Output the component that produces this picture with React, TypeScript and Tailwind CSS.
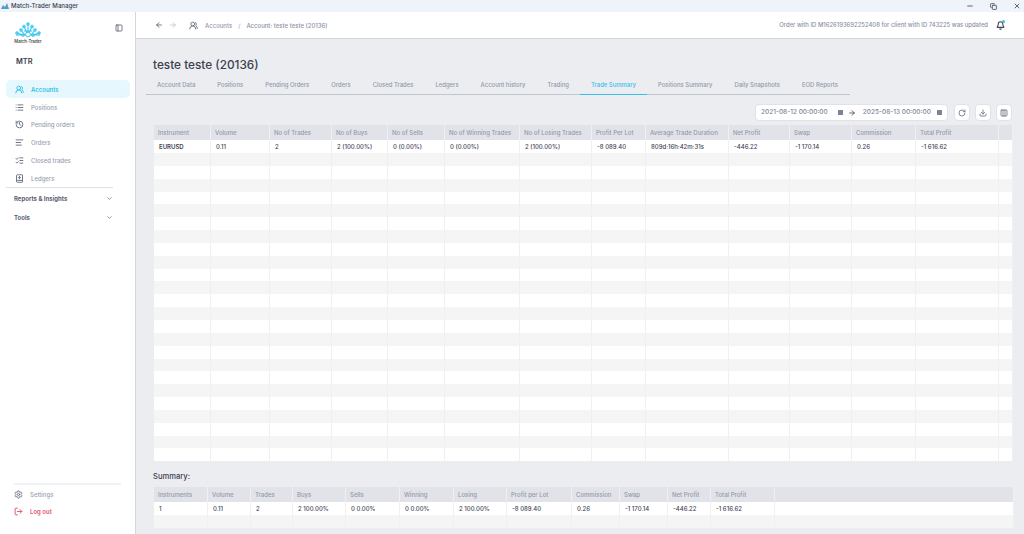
import {
  ArrowLeft,
  ArrowRight,
  Bell,
  ChevronDown,
  Columns3,
  Copy,
  Download,
  History,
  ListChecks,
  List,
  AlignLeft,
  BookUp,
  LogOut,
  Minus,
  PanelLeft,
  RotateCw,
  Settings,
  UsersRound,
  X,
} from 'lucide-react'

const FONT = 'font-["Inter","Noto_Sans",sans-serif]'

const NAV_ITEMS = [
  { label: 'Positions', icon: List },
  { label: 'Pending orders', icon: History },
  { label: 'Orders', icon: AlignLeft },
  { label: 'Closed trades', icon: ListChecks },
  { label: 'Ledgers', icon: BookUp },
]

const TABS = [
  'Account Data',
  'Positions',
  'Pending Orders',
  'Orders',
  'Closed Trades',
  'Ledgers',
  'Account history',
  'Trading',
  'Trade Summary',
  'Positions Summary',
  'Daily Snapshots',
  'EOD Reports',
]

const MAIN_HEAD = [
  'Instrument',
  'Volume',
  'No of Trades',
  'No of Buys',
  'No of Sells',
  'No of Winning Trades',
  'No of Losing Trades',
  'Profit Per Lot',
  'Average Trade Duration',
  'Net Profit',
  'Swap',
  'Commission',
  'Total Profit',
  '',
]

const MAIN_ROW = [
  'EURUSD',
  '0.11',
  '2',
  '2 (100.00%)',
  '0 (0.00%)',
  '0 (0.00%)',
  '2 (100.00%)',
  '-8 089.40',
  '809d:16h:42m:31s',
  '-446.22',
  '-1 170.14',
  '0.26',
  '-1 616.62',
  '',
]

const SUMMARY_HEAD = [
  'Instruments',
  'Volume',
  'Trades',
  'Buys',
  'Sells',
  'Winning',
  'Losing',
  'Profit per Lot',
  'Commission',
  'Swap',
  'Net Profit',
  'Total Profit',
  '',
]

const SUMMARY_ROW = [
  '1',
  '0.11',
  '2',
  '2 100.00%',
  '0 0.00%',
  '0 0.00%',
  '2 100.00%',
  '-8 089.40',
  '0.26',
  '-1 170.14',
  '-446.22',
  '-1 616.62',
  '',
]

const MAIN_COLS =
  'grid grid-cols-[57px_59px_62px_56px_57px_75px_72px_54px_83px_61px_62px_64px_83px_14px]'
const SUMMARY_COLS =
  'grid grid-cols-[54px_43px_42px_53px_54px_54px_53px_65px_48px_48px_43px_64px_239px]'

function Logo() {
  const nodes = [
    [2, 11],
    [6, 8],
    [8, 13],
    [9, 4.5],
    [13, 2],
    [17, 4.5],
    [20, 8],
    [18, 13],
    [24, 11],
  ]
  return (
    <svg width="26" height="16" viewBox="0 0 26 16" fill="none">
      <g stroke="#35c4ee" strokeWidth="1.1">
        <path d="M1 13H25M13 2V13M9 4.5L13 13L17 4.5M6 8L10 13M20 8L16 13M2 11L8 13M24 11L18 13M9 9H17" />
      </g>
      {nodes.map(([cx, cy]) => (
        <circle key={`${cx}-${cy}`} cx={cx} cy={cy} r="1.5" fill="#4fd0f3" stroke="#35c4ee" strokeWidth="0.5" />
      ))}
      <circle cx="13" cy="12.5" r="2.4" fill="#ffffff" stroke="#35c4ee" />
    </svg>
  )
}

function DataTable({
  cols,
  head,
  row,
  rows,
}: {
  cols: string
  head: string[]
  row: string[]
  rows: number
}) {
  return (
    <div>
      <div className={`${cols} h-[15px] bg-[#e1e3e8]`}>
        {head.map((h, i) => (
          <div
            key={i}
            className="flex items-center whitespace-nowrap border-r border-[#eef0f3] pl-[4px] text-[6px] font-medium text-[#9299ac]"
          >
            {h}
          </div>
        ))}
      </div>
      <div className={`${cols} h-[13px] bg-white`}>
        {row.map((c, i) => (
          <div
            key={i}
            className={`flex items-center whitespace-nowrap border-r border-[#eef0f3] pl-[5px] text-[6px] text-[#3f4454] ${
              c === 'EURUSD' ? 'font-semibold' : 'font-medium'
            }`}
          >
            {c}
          </div>
        ))}
      </div>
      {Array.from({ length: rows }).map((_, r) => (
        <div
          key={r}
          className={`${cols} h-[12.85px] ${r % 2 === 0 ? 'bg-[#f5f5f6]' : 'bg-white'}`}
        >
          {head.map((_, i) => (
            <div key={i} className="border-r border-[#eef0f3]" />
          ))}
        </div>
      ))}
    </div>
  )
}

function Sidebar() {
  return (
    <aside className="flex w-[136px] shrink-0 flex-col border-r border-[#d5d7dd] bg-white">
      <div className="flex items-start justify-between pl-[14px] pr-[12px] pt-[10px]">
        <div className="flex w-[28px] flex-col items-center">
          <Logo />
          <span className="mt-[1px] whitespace-nowrap text-[4.2px] font-medium text-[#333]">
            Match-Trader
          </span>
        </div>
        <PanelLeft size={8} strokeWidth={2.5} className="mt-[2px] text-[#5d6472]" />
      </div>
      <div className="mt-[11px] pl-[16px] text-[7.4px] font-semibold text-[#3c4150]">MTR</div>

      <nav className="mt-[13px] flex flex-col pl-[6px] pr-[5px]">
        <div className="flex h-[18px] items-center gap-[7px] rounded-[5px] bg-[#e6f8fe] pl-[9px] text-[6px] font-semibold text-[#38bfe7]">
          <UsersRound size={9} strokeWidth={2.6} />
          Accounts
        </div>
        {NAV_ITEMS.map(({ label, icon: Icon }) => (
          <div
            key={label}
            className="flex h-[17.7px] items-center gap-[7px] pl-[9px] text-[6px] font-medium text-[#9aa1b1]"
          >
            <Icon size={9} strokeWidth={2.6} className="text-[#6f7686]" />
            {label}
          </div>
        ))}
      </nav>

      <div className="ml-[6px] w-[107px] border-t border-[#dfe1e6]" />
      <div className="mt-[5px] flex h-[12px] items-center justify-between pl-[14px] pr-[22px] text-[6px] font-bold text-[#5a6070]">
        Reports &amp; Insights
        <ChevronDown size={7} strokeWidth={2.6} className="text-[#6f7686]" />
      </div>
      <div className="mt-[7px] flex h-[12px] items-center justify-between pl-[14px] pr-[22px] text-[6px] font-bold text-[#5a6070]">
        Tools
        <ChevronDown size={7} strokeWidth={2.6} className="text-[#6f7686]" />
      </div>

      <div className="mt-auto pb-[14px]">
        <div className="ml-[14px] w-[107px] border-t-2 border-[#eff2f7]" />
        <div className="mt-[1px] flex h-[17px] items-center gap-[7px] pl-[14px] text-[6px] font-medium text-[#9aa1b1]">
          <Settings size={9} strokeWidth={2.6} className="text-[#6f7686]" />
          Settings
        </div>
        <div className="flex h-[17px] items-center gap-[7px] pl-[14px] text-[6px] font-semibold text-[#e5566d]">
          <LogOut size={9} strokeWidth={2.6} />
          Log out
        </div>
      </div>
    </aside>
  )
}

function TopBar() {
  return (
    <header className="flex h-[27px] shrink-0 items-center border-b border-[#d5d7dd] bg-white pl-[19px] pr-[19px]">
      <ArrowLeft size={8} strokeWidth={2.6} className="text-[#5d6472]" />
      <ArrowRight size={8} strokeWidth={2.4} className="ml-[6px] text-[#bcc1cb]" />
      <UsersRound size={9} strokeWidth={2.6} className="ml-[12px] text-[#6f7686]" />
      <span className="ml-[7px] whitespace-nowrap text-[6px] font-medium text-[#9299ac]">Accounts</span>
      <span className="ml-[6px] text-[6px] text-[#9299ac]">/</span>
      <span className="ml-[6px] whitespace-nowrap text-[6px] font-medium text-[#8a91a3]">
        Account: teste teste (20136)
      </span>
      <span className="ml-auto whitespace-nowrap text-[5.9px] font-medium text-[#8a91a3]">
        Order with ID M1626193692252408 for client with ID 743225 was updated
      </span>
      <span className="relative ml-[8px]">
        <Bell size={9} strokeWidth={2.8} className="text-[#3f4454]" />
        <span className="absolute right-[0px] top-[-1px] h-[3px] w-[3px] rounded-full bg-[#35bfe8]" />
      </span>
    </header>
  )
}

export default function App() {
  return (
    <div className={`flex h-screen w-screen flex-col overflow-hidden bg-white ${FONT}`}>
      <div className="flex h-[12px] shrink-0 items-center bg-[#eff3fa]">
        <svg width="8" height="6" viewBox="0 0 8 6" className="ml-[1px]">
          <path d="M0 6L2 2L4 4L6 0L8 6Z" fill="#4f9fc4" />
        </svg>
        <span className="ml-[2px] text-[6.1px] font-medium text-[#3b3f48]">Match-Trader Manager</span>
        <div className="ml-auto flex items-center gap-[16px] pr-[3px] text-[#4c505a]">
          <Minus size={8} strokeWidth={2.6} />
          <Copy size={7} strokeWidth={2.8} />
          <X size={8} strokeWidth={2.6} />
        </div>
      </div>

      <div className="flex min-h-0 flex-1">
        <Sidebar />
        <div className="flex min-w-0 flex-1 flex-col bg-[#ebedf1]">
          <TopBar />
          <main className="flex-1 pl-[10px] pr-[10px]">
            <h1 className="ml-[7px] mt-[17px] text-[11.8px] font-medium leading-[18px] text-[#3c4150]">
              teste teste (20136)
            </h1>
            <div className="mt-[5px] flex w-[704px] border-b border-[#c3c6ce]">
              {TABS.map((tab) => (
                <div
                  key={tab}
                  className={`-mb-px flex h-[16px] items-center whitespace-nowrap border-b px-[11px] pb-[2px] text-[5.93px] font-medium ${
                    tab === 'Trade Summary'
                      ? 'border-[#38bfe7] text-[#38bfe7]'
                      : 'border-transparent text-[#9299ac]'
                  }`}
                >
                  {tab}
                </div>
              ))}
            </div>

            <div className="mt-[9px] flex justify-end gap-[5px] pr-[2px]">
              <div className="mr-[1px] flex h-[17px] w-[193px] items-center rounded-[4px] border border-[#e0e2e8] bg-white pl-[5px] pr-[5px] text-[6.5px] font-medium text-[#7d8496]">
                <span className="whitespace-nowrap">2021-08-12 00:00:00</span>
                <span className="ml-[10px] h-[5px] w-[5px] bg-[#7d8496]" />
                <ArrowRight size={8} strokeWidth={2.6} className="ml-[5px] text-[#4c5160]" />
                <span className="ml-[7px] whitespace-nowrap">2025-08-13 00:00:00</span>
                <span className="ml-auto h-[5px] w-[5px] bg-[#7d8496]" />
              </div>
              {[RotateCw, Download, Columns3].map((Icon, i) => (
                <div
                  key={i}
                  className="flex h-[17px] w-[16px] items-center justify-center rounded-[4px] border border-[#e0e2e8] bg-white"
                >
                  <Icon size={8} strokeWidth={2.6} className="text-[#6f7686]" />
                </div>
              ))}
            </div>

            <div className="ml-[8px] mt-[4px] w-[859px]">
              <DataTable cols={MAIN_COLS} head={MAIN_HEAD} row={MAIN_ROW} rows={24} />
            </div>

            <div className="ml-[7px] mt-[11px] text-[7.6px] font-medium leading-[10px] text-[#3c4150]">
              Summary:
            </div>
            <div className="ml-[8px] mt-[5px] w-[859px]">
              <DataTable cols={SUMMARY_COLS} head={SUMMARY_HEAD} row={SUMMARY_ROW} rows={1} />
            </div>
          </main>
        </div>
      </div>
    </div>
  )
}
